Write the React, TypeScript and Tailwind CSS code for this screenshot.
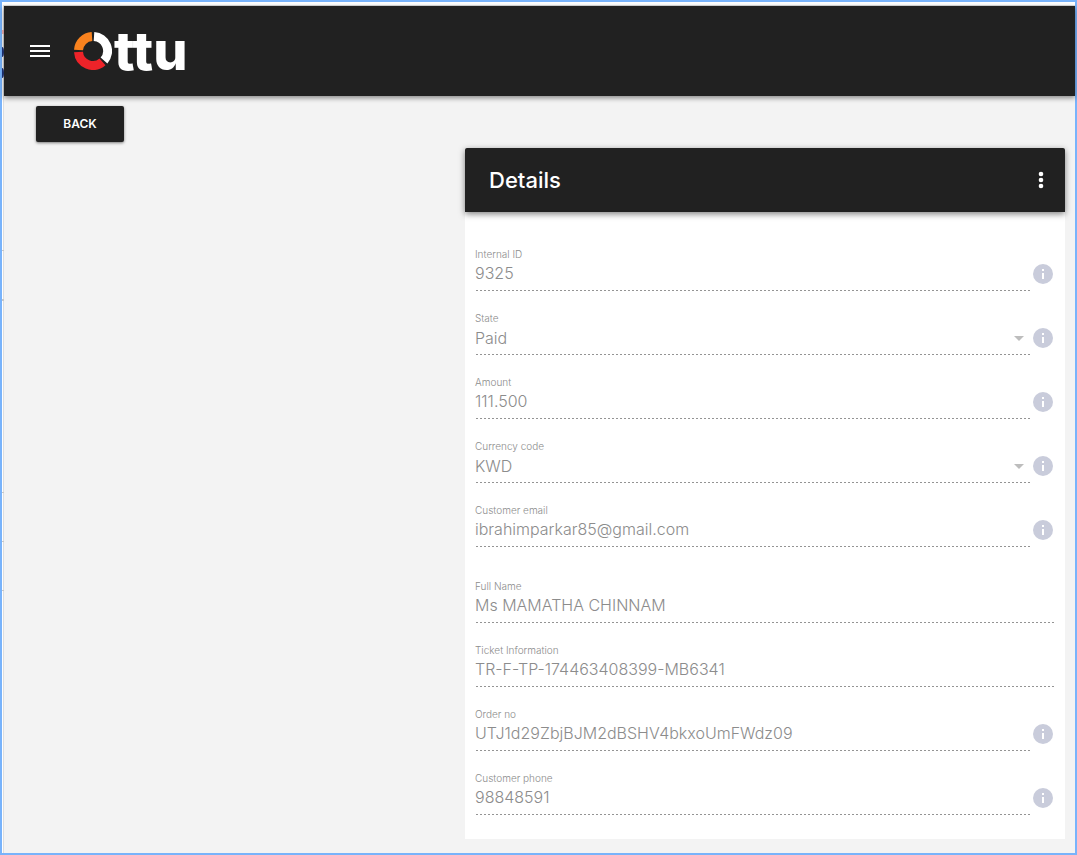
import React from 'react';

interface Field {
  id: string;
  label: string;
  value: string;
  select?: boolean;
  info?: boolean;
}

const paymentFields: Field[] = [
  { id: 'internal-id', label: 'Internal ID', value: '9325', info: true },
  { id: 'state', label: 'State', value: 'Paid', select: true, info: true },
  { id: 'amount', label: 'Amount', value: '111.500', info: true },
  { id: 'currency-code', label: 'Currency code', value: 'KWD', select: true, info: true },
  { id: 'customer-email', label: 'Customer email', value: 'ibrahimparkar85@gmail.com', info: true },
];

const orderFields: Field[] = [
  { id: 'full-name', label: 'Full Name', value: 'Ms MAMATHA CHINNAM' },
  { id: 'ticket-information', label: 'Ticket Information', value: 'TR-F-TP-174463408399-MB6341' },
  { id: 'order-no', label: 'Order no', value: 'UTJ1d29ZbjBJM2dBSHV4bkxoUmFWdz09', info: true },
  { id: 'customer-phone', label: 'Customer phone', value: '98848591', info: true },
];

const controlClass =
  'block h-7 w-full appearance-none bg-transparent pb-1.5 text-base font-light text-[#8c8c8c] opacity-100 outline-none';

const InfoIcon = () => (
  <svg viewBox="0 0 20 20" className="h-5 w-5" aria-hidden="true">
    <circle cx="10" cy="10" r="10" fill="#c9ccdb" />
    <rect x="9" y="5" width="2" height="2" fill="#fff" />
    <rect x="9" y="9" width="2" height="6" fill="#fff" />
  </svg>
);

const FieldRow: React.FC<{ field: Field }> = ({ field }) => (
  <div className="flex gap-0.5">
    <div className="min-w-0 flex-1">
      <label htmlFor={field.id} className="block h-4 text-[10px] leading-4 font-light text-[#8c8c8c]">
        {field.label}
      </label>
      <div className="flex items-center">
        {field.select ? (
          <>
            <select id={field.id} className={controlClass} defaultValue={field.value} disabled>
              <option>{field.value}</option>
            </select>
            <svg viewBox="0 0 10 5" className="mr-[7px] mb-1 h-[5px] w-[10px] shrink-0" aria-hidden="true">
              <path d="M0 0h10L5 5z" fill="#bdbdbd" />
            </svg>
          </>
        ) : (
          <input id={field.id} type="text" className={controlClass} value={field.value} disabled readOnly />
        )}
      </div>
      <div className="h-px bg-[linear-gradient(to_right,transparent_25%,#949494_25%,#949494_75%,transparent_75%)] bg-[length:4px_1px]" />
    </div>
    {field.info && (
      <button type="button" aria-label={`About ${field.label}`} className="mt-[18px] mr-0.5 h-5 w-5 shrink-0">
        <InfoIcon />
      </button>
    )}
  </div>
);

const Logo = () => (
  <a href="#" aria-label="Ottu" className="flex items-center gap-0.5 text-white">
    <svg viewBox="0 0 38 38" className="h-[38px] w-[38px]" fill="none" strokeWidth="9" aria-hidden="true">
      <path d="M4.5 18A14.5 14.5 0 0 1 18 4.5" stroke="#f9821e" />
      <path d="M20 4.5A14.5 14.5 0 0 1 30 28.5" stroke="#fff" />
      <path d="M28.5 29.8A14.5 14.5 0 0 1 4.5 20" stroke="#ee2329" />
    </svg>
    <span className="text-[54px] leading-9 font-extrabold">ttu</span>
  </a>
);

const Header = () => (
  <header className="relative flex h-[90px] items-center gap-6 bg-[#212121] px-[26px] shadow-[0_2px_5px_rgba(0,0,0,0.45)]">
    <button type="button" aria-label="Open menu">
      <svg viewBox="0 0 20 12" className="h-3 w-5" fill="#fff" aria-hidden="true">
        <path d="M0 0h20v2H0zM0 5h20v2H0zM0 10h20v2H0z" />
      </svg>
    </button>
    <Logo />
  </header>
);

const DetailsCard = () => (
  <section className="mr-[10px] ml-auto w-full max-w-[600px] bg-white">
    <div className="flex h-16 items-center justify-between rounded-t-xs bg-[#212121] pr-[21px] pl-6 shadow-[0_2px_6px_rgba(0,0,0,0.5)]">
      <h1 className="text-[22px] font-medium text-white">Details</h1>
      <button type="button" aria-label="More actions">
        <svg viewBox="0 0 6 18" className="h-[18px] w-[6px]" fill="#fff" aria-hidden="true">
          <circle cx="3" cy="3" r="2.3" />
          <circle cx="3" cy="9" r="2.3" />
          <circle cx="3" cy="15" r="2.3" />
        </svg>
      </button>
    </div>
    <form className="flex flex-col gap-[31px] px-[10px] pt-[34px] pb-6">
      <div className="flex flex-col gap-[19px]">
        {paymentFields.map((field) => (
          <FieldRow key={field.id} field={field} />
        ))}
      </div>
      <div className="flex flex-col gap-[19px]">
        {orderFields.map((field) => (
          <FieldRow key={field.id} field={field} />
        ))}
      </div>
    </form>
  </section>
);

// Slivers of the window behind that show along the left edge
const EdgeMarks = () => (
  <svg className="absolute top-0 left-0 h-[600px] w-0.5" aria-hidden="true">
    <rect y="28" width="2" height="4" fill="#f5b5b5" />
    <ellipse cx="0" cy="50" rx="2" ry="5" fill="#20357c" />
    <ellipse cx="0" cy="71" rx="2" ry="5" fill="#20357c" />
    <path d="M0 248h2v1H0zM0 297h2v2H0zM0 490h2v1H0zM0 539h2v1H0zM0 588h2v1H0z" fill="#c8c8c8" />
  </svg>
);

export default function App() {
  return (
    <div className="relative flex min-h-screen flex-col border-2 border-[#78b3fb] bg-white pt-[3px] pl-px font-['Inter',sans-serif]">
      <EdgeMarks />
      <div className="flex-1 border-t border-l border-[#dedede] bg-[#f3f3f3]">
        <Header />
        <main className="flex flex-col gap-1.5 pt-[10px]">
          <div className="px-8">
            <button
              type="button"
              className="block h-9 w-[88px] rounded-xs bg-[#212121] text-xs font-semibold text-white shadow-[0_1px_3px_rgba(0,0,0,0.5)]"
            >
              BACK
            </button>
          </div>
          <DetailsCard />
        </main>
      </div>
    </div>
  );
}
